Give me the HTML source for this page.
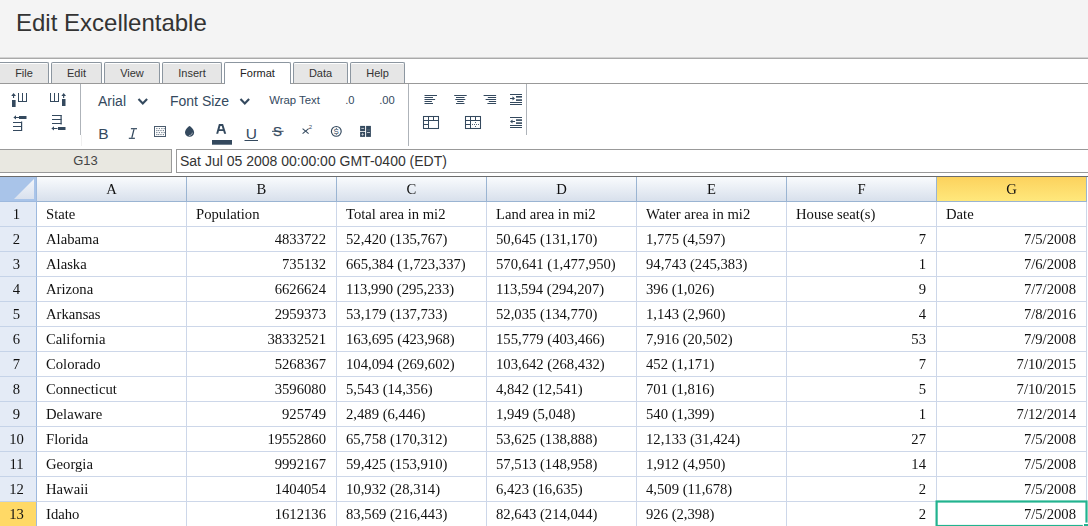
<!DOCTYPE html>
<html><head><meta charset="utf-8">
<style>
*{margin:0;padding:0;box-sizing:border-box}
html,body{width:1088px;height:526px;overflow:hidden;background:#fff;font-family:"Liberation Sans",sans-serif;position:relative}
#title{position:absolute;left:0;top:0;width:1088px;height:57px;background:#f4f4f4}
#title h1{position:absolute;left:16px;top:9px;font-size:24px;font-weight:normal;color:#333;line-height:28px;white-space:nowrap}
#topline{position:absolute;left:0;top:57px;width:1088px;height:2px;border-top:1px solid #d3d3d3;background:#a9a9a9}
.tab{position:absolute;top:62px;height:22px;border:1px solid #8c96a0;border-bottom:none;border-radius:2px 2px 0 0;background:#e6e6e6;font-size:11px;color:#333;text-align:center;line-height:20px;box-shadow:inset 0 1px 0 #fff}
.tab.act{background:#fff;height:22px;z-index:2;color:#222}
#tabline{position:absolute;left:0;top:83px;width:1088px;height:1px;background:#999}
.sep{position:absolute;width:1px;background:#aeb3b9}
#namebox{position:absolute;left:-1px;top:149px;width:173px;height:24px;border:1px solid #999;background:#e9e8e1;font-size:13px;color:#444;text-align:center;line-height:22px}
#fx{position:absolute;left:176px;top:149px;width:920px;height:24px;border:1px solid #999;background:#fff;font-size:14px;color:#333;line-height:22px;padding-left:3px;white-space:nowrap}
#gridtop{position:absolute;left:0;top:176px;width:1088px;height:1px;background:#6c6c6c}
.corner{position:absolute;left:0;top:177px;width:37px;height:25px;background:#a9c4e9;border-right:1px solid #9db9de;border-bottom:1px solid #9db9de}
.ch{position:absolute;top:177px;width:150px;height:25px;background:linear-gradient(#f9fbfd,#d8e0ec);border-right:1px solid #9ab4d2;border-bottom:1px solid #9ab4d2;font-family:"Liberation Serif",serif;font-size:14.667px;color:#111;text-align:center;line-height:25px}
.ch.sel{background:linear-gradient(#fcd25d,#ffe87c)}
.rh{position:absolute;left:0;width:37px;height:25px;background:#e4ebf6;border-right:1px solid #9db9de;border-bottom:1px solid #c5d3e8;font-family:"Liberation Serif",serif;font-size:14.667px;color:#111;text-align:center;line-height:25px;padding-right:3px}
.rh.sel{background:#ffd966}
.c{position:absolute;width:150px;height:25px;border-right:1px solid #cdd7e9;border-bottom:1px solid #cdd7e9;font-family:"Liberation Serif",serif;font-size:14.667px;color:#111;line-height:25px;padding:0 10px 0 9px;white-space:nowrap;overflow:hidden}
.c.r{text-align:right}
#active{position:absolute;left:935px;top:501px;width:152px;height:27px;border:2px solid #2ab597}
#tb{position:absolute;left:0;top:0}
</style></head><body>
<div id="title"><h1>Edit Excellentable</h1></div>
<div id="topline"></div>
<div class="tab" style="left:-4px;width:53px;padding-left:3px">File</div>
<div class="tab" style="left:51px;width:51px">Edit</div>
<div class="tab" style="left:104px;width:56px">View</div>
<div class="tab" style="left:162px;width:60px">Insert</div>
<div class="tab act" style="left:224px;width:67px">Format</div>
<div class="tab" style="left:293px;width:55px">Data</div>
<div class="tab" style="left:350px;width:55px">Help</div>
<div id="tabline"></div>
<div class="sep" style="left:80px;top:84px;height:51px"></div><div class="sep" style="left:81px;top:135px;height:11px;background:#f0f0f0"></div>
<div class="sep" style="left:408px;top:84px;height:62px"></div>
<div class="sep" style="left:526px;top:84px;height:51px"></div>
<svg id="tb" width="1088" height="150" viewBox="0 0 1088 150">
<g fill="#34495e">
<!-- insert col left -->
<polygon points="11.2,96 13.6,93.1 16,96"/><rect x="13" y="95.5" width="1.1" height="2.5"/>
<rect x="12" y="100" width="3.6" height="7"/>
<rect x="18" y="93" width="1" height="9"/><rect x="22" y="93" width="1" height="9"/><rect x="26" y="93" width="1" height="9"/><rect x="18" y="101" width="9" height="1"/>
<!-- insert col right -->
<rect x="50" y="93" width="1" height="9"/><rect x="54" y="93" width="1" height="9"/><rect x="58" y="93" width="1" height="9"/><rect x="50" y="101" width="9" height="1"/>
<polygon points="61.4,96 63.7,93.1 66,96"/><rect x="63.1" y="95.5" width="1.1" height="2.5"/>
<rect x="62" y="99" width="3.5" height="7"/>
<!-- insert row above -->
<polygon points="13.4,117.4 16,115.2 16,119.6"/><rect x="15.5" y="117" width="3.5" height="1"/>
<rect x="19" y="116" width="7.5" height="3"/>
<rect x="13" y="122" width="9" height="1"/><rect x="13" y="126" width="9" height="1"/><rect x="13" y="130" width="9" height="1"/><rect x="21" y="121.5" width="1.2" height="9.5"/>
<!-- insert row below -->
<rect x="52" y="115" width="9.5" height="1"/><rect x="52" y="119" width="9.5" height="1"/><rect x="52" y="123" width="9.5" height="1"/><rect x="60.5" y="115" width="1.2" height="9.5"/>
<polygon points="51.4,128.4 54,126.2 54,130.6"/><rect x="53.5" y="128" width="4" height="1"/>
<rect x="58" y="127" width="7.5" height="3"/>
</g>
<g font-family="Liberation Sans" fill="#34495e">
<text x="98" y="106" font-size="14">Arial</text>
<text x="170" y="106" font-size="14">Font Size</text>
<text x="269.2" y="104" font-size="11.35">Wrap Text</text>
<text x="345.2" y="104" font-size="11.2">.0</text>
<text x="379.2" y="104" font-size="11.2">.00</text>
<text x="98.3" y="138.6" font-size="15.5">B</text>
<text x="245.7" y="138.6" font-size="15.5">U</text>
<text x="273.1" y="135.8" font-size="13.5" stroke="#34495e" stroke-width="0.25">S</text>

<text x="308.8" y="129" font-size="6">2</text>

</g>
<g fill="#34495e"><rect x="130.9" y="128.1" width="6.1" height="1.2"/><rect x="128.8" y="137.7" width="6.1" height="1.2"/><polygon points="133.3,129.2 134.6,129.2 132.5,137.8 131.2,137.8"/></g>
<g stroke="#34495e" stroke-width="1.05"><line x1="302.6" y1="128.6" x2="308.6" y2="133.6"/><line x1="308.6" y1="128.6" x2="302.6" y2="133.6"/></g>
<g fill="none" stroke="#34495e" stroke-width="2.1">
<polyline points="138.5,99 142.8,103.5 147.1,99"/>
<polyline points="240.5,99 244.8,103.5 249.1,99"/>
</g>
<g fill="#34495e">
<rect x="212" y="140" width="20" height="4.7"/>
<rect x="244.5" y="140" width="13.5" height="1"/>
<rect x="272" y="130.8" width="11.6" height="1"/>
</g>
<!-- border icon -->
<rect x="154.5" y="126.5" width="11" height="10" fill="none" stroke="#4a5b6d" stroke-width="1"/>
<g fill="#34495e" opacity="0.75"><rect x="156.3" y="128" width="1.1" height="1.1"/><rect x="158.8" y="128" width="1.1" height="1.1"/><rect x="161.3" y="128" width="1.1" height="1.1"/><rect x="163.6" y="128" width="1.1" height="1.1"/><rect x="156.3" y="130" width="1.1" height="1.1"/><rect x="158.2" y="130" width="1.1" height="1.1"/><rect x="160.4" y="130" width="1.1" height="1.1"/><rect x="162.8" y="130" width="1.1" height="1.1"/><rect x="156.3" y="132" width="1.1" height="1.1"/><rect x="158.8" y="132" width="1.1" height="1.1"/><rect x="161.3" y="132" width="1.1" height="1.1"/><rect x="163.6" y="132" width="1.1" height="1.1"/><rect x="156.3" y="134" width="1.1" height="1.1"/><rect x="158.2" y="134" width="1.1" height="1.1"/><rect x="160.4" y="134" width="1.1" height="1.1"/><rect x="162.8" y="134" width="1.1" height="1.1"/></g>
<path fill-rule="evenodd" fill="#34495e" d="M218.9,124 L223.1,124 L226.2,133.7 L224.1,133.7 L223.3,131 L218.9,131 L218.2,133.7 L216.2,133.7 Z M219.5,129.2 L222.7,129.2 L221.7,125.9 L220.4,125.9 Z"/>
<!-- drop -->
<path d="M189.55,125.9 C190.6,126.1 194.1,129.6 194.1,132.5 C194.1,135.1 192.1,136.8 189.55,136.8 C187,136.8 185,135.1 185,132.5 C185,129.6 188.5,126.1 189.55,125.9 Z" fill="#34495e"/>
<path d="M192.3,132.6 C192.2,134.3 191,135.4 188.9,135.6" fill="none" stroke="#fff" stroke-width="0.7" opacity="0.75"/>
<!-- dollar circle -->
<circle cx="336.3" cy="131.35" r="4.9" fill="none" stroke="#34495e" stroke-width="1.15"/>
<text x="333.6" y="134.4" font-size="8" font-family="Liberation Sans" fill="#34495e">S</text><rect x="335.9" y="127.8" width="0.8" height="1.3" fill="#34495e"/><rect x="335.9" y="133.6" width="0.8" height="1.3" fill="#34495e"/>
<!-- merge grid -->
<g fill="#34495e">
<rect x="360.1" y="125.9" width="5" height="5.2"/><rect x="360.1" y="131.9" width="5" height="5"/>
<rect x="366.1" y="125.9" width="4.8" height="11"/>
</g>
<g fill="#fff" opacity="0.75"><rect x="361.3" y="127.9" width="2.8" height="0.9"/><polygon points="362.6,133 363.9,134.4 362.6,135.8 361.3,134.4"/><rect x="367" y="132" width="3" height="0.9"/></g>
<rect x="367" y="129.6" width="3" height="0.8" fill="#8a96a3" opacity="0.6"/>
<!-- align icons -->
<g fill="#34495e">
<rect x="424.5" y="95" width="12.5" height="1"/><rect x="424.5" y="97" width="8.5" height="1"/><rect x="424.5" y="99" width="10.6" height="1"/><rect x="424.5" y="101" width="7.4" height="1"/><rect x="424.5" y="103" width="8.5" height="1"/>
<rect x="454.2" y="95" width="12.5" height="1"/><rect x="456" y="97" width="8.5" height="1"/><rect x="455.3" y="99" width="10" height="1"/><rect x="457.2" y="101" width="6.4" height="1"/><rect x="456" y="103" width="8.5" height="1"/>
<rect x="483.6" y="95" width="12.5" height="1"/><rect x="487.8" y="97" width="8.3" height="1"/><rect x="485.6" y="99" width="10.5" height="1"/><rect x="488.8" y="101" width="7.3" height="1"/><rect x="487.4" y="103" width="8.7" height="1"/>
<!-- indent -->
<rect x="510" y="94" width="12" height="1"/><rect x="516" y="96" width="6" height="1.6"/><rect x="516" y="99.3" width="6" height="1.6"/><rect x="510" y="102" width="12" height="1"/><rect x="510" y="104" width="12" height="1"/>
<polygon points="515,98.4 512.5,96.3 512.5,100.5"/><rect x="510" y="98" width="3" height="1"/>
<!-- outdent -->
<rect x="510" y="117" width="12" height="1"/><rect x="516" y="119.3" width="6" height="1.6"/><rect x="516" y="122.3" width="6" height="1.6"/><rect x="510" y="125" width="12" height="1"/><rect x="510" y="127" width="12" height="1"/>
<polygon points="510,121.5 512.5,119.4 512.5,123.6"/><rect x="512" y="121" width="3" height="1"/>
</g>
<!-- merge table icons -->
<g fill="none" stroke="#34495e" stroke-width="1.05">
<rect x="423.5" y="116.5" width="15" height="12"/>
<line x1="423.5" y1="120.5" x2="438.5" y2="120.5"/><line x1="423.5" y1="124.5" x2="428.5" y2="124.5"/>
<line x1="428.5" y1="116.5" x2="428.5" y2="128.5"/><line x1="433.5" y1="116.5" x2="433.5" y2="120.5"/>
<rect x="465.5" y="116.5" width="15" height="12"/>
<line x1="465.5" y1="120.5" x2="480.5" y2="120.5"/><line x1="465.5" y1="124.5" x2="470.5" y2="124.5"/>
<line x1="470.5" y1="116.5" x2="470.5" y2="128.5"/><line x1="475.5" y1="116.5" x2="475.5" y2="120.5"/>
</g>
<g fill="#34495e" opacity="0.85">
<rect x="472" y="124" width="1" height="1"/><rect x="474" y="124" width="1" height="1"/><rect x="476" y="124" width="1" height="1"/><rect x="478" y="124" width="1" height="1"/>
<rect x="475" y="122" width="1" height="1"/><rect x="475" y="126" width="1" height="1"/>
</g>
</svg>

<div id="namebox">G13</div>
<div id="fx">Sat Jul 05 2008 00:00:00 GMT-0400 (EDT)</div>
<div id="gridtop"></div>
<div class="corner"><svg width="36" height="24" style="position:absolute;left:0;top:0"><defs><linearGradient id="cg" x1="0" y1="0" x2="0" y2="1"><stop offset="0" stop-color="#f2f5fa"/><stop offset="1" stop-color="#d9e1ee"/></linearGradient></defs><polygon points="14,22 34,2 34,22" fill="url(#cg)"/></svg></div>
<div id="gridwrap" style="position:absolute;left:0;top:0;width:1088px;height:526px;will-change:transform">
<div class="ch" style="left:37px">A</div>
<div class="ch" style="left:187px">B</div>
<div class="ch" style="left:337px">C</div>
<div class="ch" style="left:487px">D</div>
<div class="ch" style="left:637px">E</div>
<div class="ch" style="left:787px">F</div>
<div class="ch sel" style="left:937px">G</div>
<div class="rh" style="top:202px">1</div>
<div class="c" style="top:202px;left:37px">State</div>
<div class="c" style="top:202px;left:187px">Population</div>
<div class="c" style="top:202px;left:337px">Total area in mi2</div>
<div class="c" style="top:202px;left:487px">Land area in mi2</div>
<div class="c" style="top:202px;left:637px">Water area in mi2</div>
<div class="c" style="top:202px;left:787px">House seat(s)</div>
<div class="c" style="top:202px;left:937px">Date</div>
<div class="rh" style="top:227px">2</div>
<div class="c" style="top:227px;left:37px">Alabama</div>
<div class="c r" style="top:227px;left:187px">4833722</div>
<div class="c" style="top:227px;left:337px">52,420 (135,767)</div>
<div class="c" style="top:227px;left:487px">50,645 (131,170)</div>
<div class="c" style="top:227px;left:637px">1,775 (4,597)</div>
<div class="c r" style="top:227px;left:787px">7</div>
<div class="c r" style="top:227px;left:937px">7/5/2008</div>
<div class="rh" style="top:252px">3</div>
<div class="c" style="top:252px;left:37px">Alaska</div>
<div class="c r" style="top:252px;left:187px">735132</div>
<div class="c" style="top:252px;left:337px">665,384 (1,723,337)</div>
<div class="c" style="top:252px;left:487px">570,641 (1,477,950)</div>
<div class="c" style="top:252px;left:637px">94,743 (245,383)</div>
<div class="c r" style="top:252px;left:787px">1</div>
<div class="c r" style="top:252px;left:937px">7/6/2008</div>
<div class="rh" style="top:277px">4</div>
<div class="c" style="top:277px;left:37px">Arizona</div>
<div class="c r" style="top:277px;left:187px">6626624</div>
<div class="c" style="top:277px;left:337px">113,990 (295,233)</div>
<div class="c" style="top:277px;left:487px">113,594 (294,207)</div>
<div class="c" style="top:277px;left:637px">396 (1,026)</div>
<div class="c r" style="top:277px;left:787px">9</div>
<div class="c r" style="top:277px;left:937px">7/7/2008</div>
<div class="rh" style="top:302px">5</div>
<div class="c" style="top:302px;left:37px">Arkansas</div>
<div class="c r" style="top:302px;left:187px">2959373</div>
<div class="c" style="top:302px;left:337px">53,179 (137,733)</div>
<div class="c" style="top:302px;left:487px">52,035 (134,770)</div>
<div class="c" style="top:302px;left:637px">1,143 (2,960)</div>
<div class="c r" style="top:302px;left:787px">4</div>
<div class="c r" style="top:302px;left:937px">7/8/2016</div>
<div class="rh" style="top:327px">6</div>
<div class="c" style="top:327px;left:37px">California</div>
<div class="c r" style="top:327px;left:187px">38332521</div>
<div class="c" style="top:327px;left:337px">163,695 (423,968)</div>
<div class="c" style="top:327px;left:487px">155,779 (403,466)</div>
<div class="c" style="top:327px;left:637px">7,916 (20,502)</div>
<div class="c r" style="top:327px;left:787px">53</div>
<div class="c r" style="top:327px;left:937px">7/9/2008</div>
<div class="rh" style="top:352px">7</div>
<div class="c" style="top:352px;left:37px">Colorado</div>
<div class="c r" style="top:352px;left:187px">5268367</div>
<div class="c" style="top:352px;left:337px">104,094 (269,602)</div>
<div class="c" style="top:352px;left:487px">103,642 (268,432)</div>
<div class="c" style="top:352px;left:637px">452 (1,171)</div>
<div class="c r" style="top:352px;left:787px">7</div>
<div class="c r" style="top:352px;left:937px">7/10/2015</div>
<div class="rh" style="top:377px">8</div>
<div class="c" style="top:377px;left:37px">Connecticut</div>
<div class="c r" style="top:377px;left:187px">3596080</div>
<div class="c" style="top:377px;left:337px">5,543 (14,356)</div>
<div class="c" style="top:377px;left:487px">4,842 (12,541)</div>
<div class="c" style="top:377px;left:637px">701 (1,816)</div>
<div class="c r" style="top:377px;left:787px">5</div>
<div class="c r" style="top:377px;left:937px">7/10/2015</div>
<div class="rh" style="top:402px">9</div>
<div class="c" style="top:402px;left:37px">Delaware</div>
<div class="c r" style="top:402px;left:187px">925749</div>
<div class="c" style="top:402px;left:337px">2,489 (6,446)</div>
<div class="c" style="top:402px;left:487px">1,949 (5,048)</div>
<div class="c" style="top:402px;left:637px">540 (1,399)</div>
<div class="c r" style="top:402px;left:787px">1</div>
<div class="c r" style="top:402px;left:937px">7/12/2014</div>
<div class="rh" style="top:427px">10</div>
<div class="c" style="top:427px;left:37px">Florida</div>
<div class="c r" style="top:427px;left:187px">19552860</div>
<div class="c" style="top:427px;left:337px">65,758 (170,312)</div>
<div class="c" style="top:427px;left:487px">53,625 (138,888)</div>
<div class="c" style="top:427px;left:637px">12,133 (31,424)</div>
<div class="c r" style="top:427px;left:787px">27</div>
<div class="c r" style="top:427px;left:937px">7/5/2008</div>
<div class="rh" style="top:452px">11</div>
<div class="c" style="top:452px;left:37px">Georgia</div>
<div class="c r" style="top:452px;left:187px">9992167</div>
<div class="c" style="top:452px;left:337px">59,425 (153,910)</div>
<div class="c" style="top:452px;left:487px">57,513 (148,958)</div>
<div class="c" style="top:452px;left:637px">1,912 (4,950)</div>
<div class="c r" style="top:452px;left:787px">14</div>
<div class="c r" style="top:452px;left:937px">7/5/2008</div>
<div class="rh" style="top:477px">12</div>
<div class="c" style="top:477px;left:37px">Hawaii</div>
<div class="c r" style="top:477px;left:187px">1404054</div>
<div class="c" style="top:477px;left:337px">10,932 (28,314)</div>
<div class="c" style="top:477px;left:487px">6,423 (16,635)</div>
<div class="c" style="top:477px;left:637px">4,509 (11,678)</div>
<div class="c r" style="top:477px;left:787px">2</div>
<div class="c r" style="top:477px;left:937px">7/5/2008</div>
<div class="rh sel" style="top:502px">13</div>
<div class="c" style="top:502px;left:37px">Idaho</div>
<div class="c r" style="top:502px;left:187px">1612136</div>
<div class="c" style="top:502px;left:337px">83,569 (216,443)</div>
<div class="c" style="top:502px;left:487px">82,643 (214,044)</div>
<div class="c" style="top:502px;left:637px">926 (2,398)</div>
<div class="c r" style="top:502px;left:787px">2</div>
<div class="c r" style="top:502px;left:937px">7/5/2008</div>
</div>
<svg style="position:absolute;left:0;top:0" width="1088" height="526"><rect x="936.6" y="501.5" width="149.9" height="24.5" fill="none" stroke="#22b38f" stroke-width="2.2"/><rect x="1082.8" y="522.6" width="6" height="5" fill="#fff"/><rect x="1084" y="524" width="5" height="3" fill="#22b38f"/></svg>
</body></html>
